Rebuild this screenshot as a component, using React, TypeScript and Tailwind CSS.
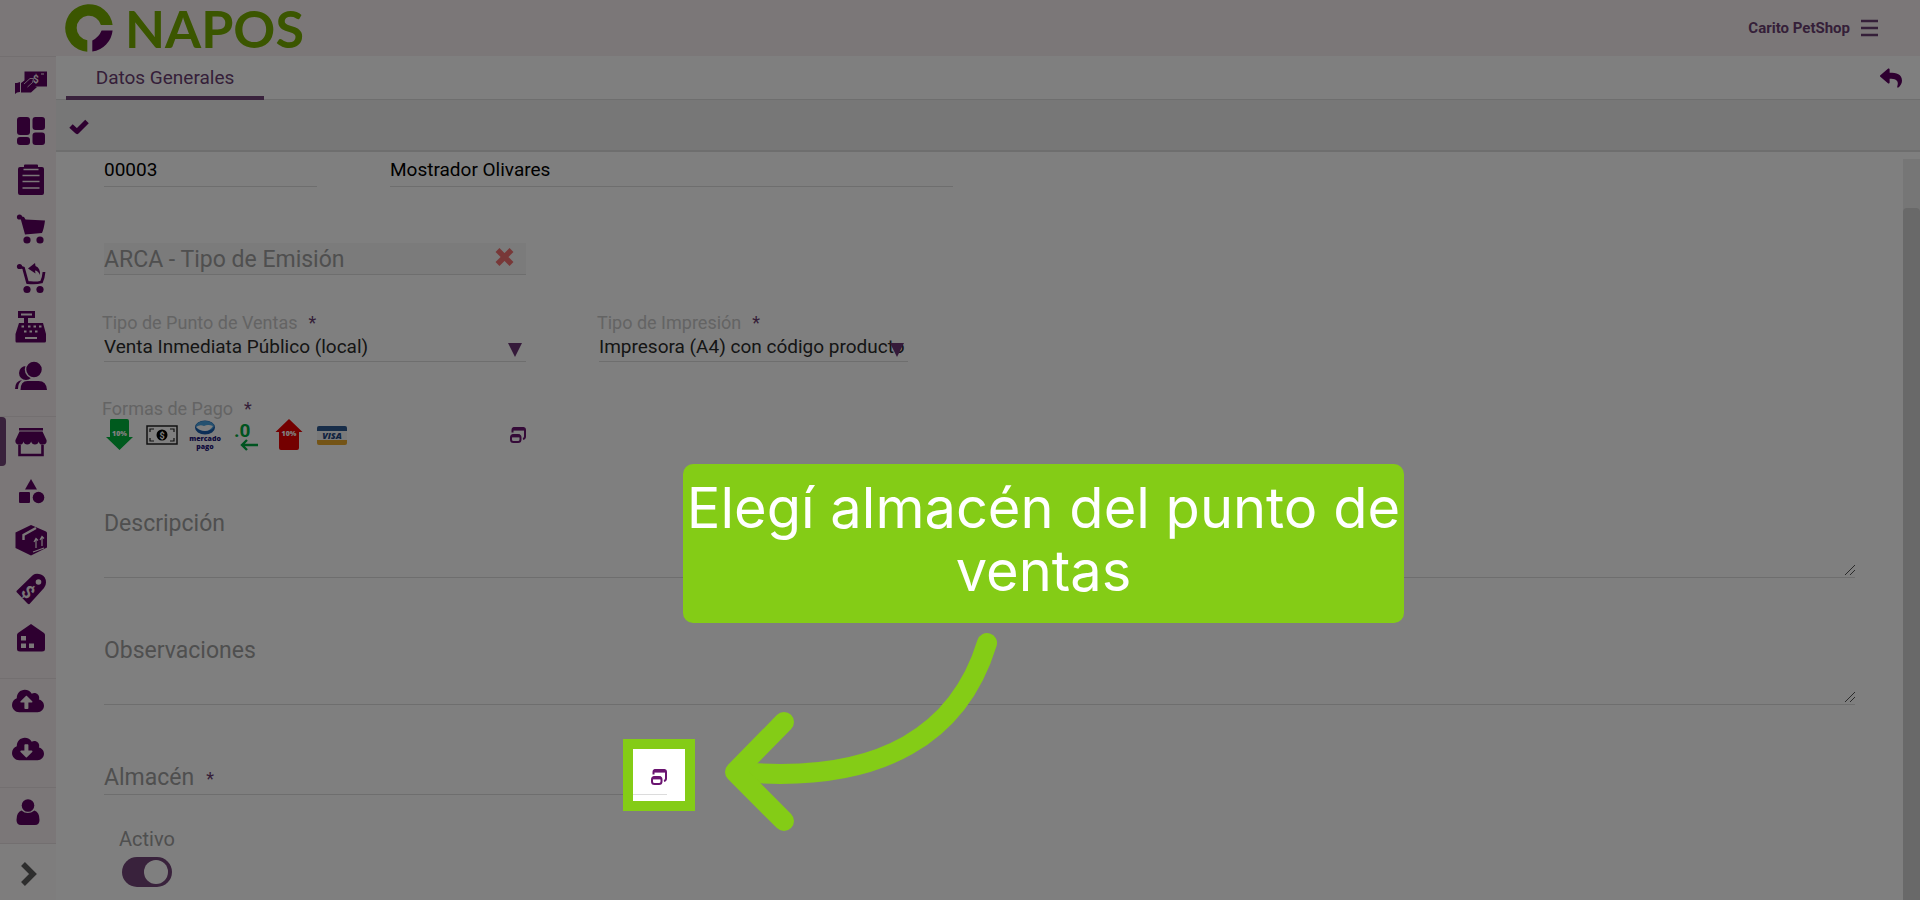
import { useState } from "react";
import type { ReactNode } from "react";
import { FaCloudDownloadAlt, FaCloudUploadAlt, FaReply } from "react-icons/fa";

function Logo() {
  return (
    <a href="#" className="flex items-center gap-3 text-[#76ac00]">
      <svg width="48" height="48" viewBox="-24 -24 48 48">
        <path fill="#76ac00" d="M23.6-3A23.8 23.8 0 1 0-1.7 23.7V12.2A12.3 12.3 0 1 1 11.9-3Z" />
        <path fill="#5c0060" d="M3.3 23.6A23.8 23.8 0 0 0 23.6 2.4H12.6Q10 9 3.3 12.4Z" />
      </svg>
      <span className="font-[Lato,sans-serif] text-[52px] font-bold leading-[56px]">NAPOS</span>
    </a>
  );
}

// Sidebar icons share a 32x32 canvas
function Icon({ children }: { children: ReactNode }) {
  return (
    <svg width="32" height="32" viewBox="0 0 32 32" fill="currentColor">
      {children}
    </svg>
  );
}

const cut = "#f6eff0";

const mainItems = [
  {
    name: "Cobros",
    icon: (
      <Icon>
        <path d="M9.500 5.500H32v15H20l-4 3.500H7.500V17l2-2Z" />
        <path d="M0 17h2l3-1v10l-3 .5-2 1.500ZM6 17l7-5h6l-3 6 6 3-6 5.500H6Z" />
        <path d="M9 18l6-5.500h3.500l-1 4-5 4.500" fill="none" stroke={cut} strokeWidth=".8" />
        <text x="18" y="17" fontSize="10" fontWeight="700" fill={cut} fontFamily="Roboto, sans-serif">$</text>
        <path d="M26 8h3" stroke={cut} strokeWidth="1" />
      </Icon>
    ),
  },
  {
    name: "Tablero",
    icon: (
      <Icon>
        <rect x="2" y="2" width="13" height="18" rx="3" />
        <rect x="17.500" y="2" width="12.500" height="13" rx="3" />
        <rect x="2" y="22" width="13" height="8" rx="3" />
        <rect x="17.500" y="17.500" width="12.500" height="12.500" rx="3" />
      </Icon>
    ),
  },
  {
    name: "Pedidos",
    icon: (
      <Icon>
        <path d="M5 3h4V1.500Q9 .5 10 .5h12q1 0 1 1V3h4q2 0 2 2v24q0 2-2 2H5q-2 0-2-2V5q0-2 2-2Z" />
        <path d="M8.500 5.500h15M7.500 11.500h17M7.500 17.500h17M7.500 24h17" stroke={cut} strokeWidth="1.600" />
      </Icon>
    ),
  },
  {
    name: "Ventas",
    icon: (
      <Icon>
        <circle cx="4.500" cy="4" r="2.600" />
        <path d="M5 3l4 1 1.500 2.500L30 7.500q-1 8-3 12.500L10 21.500 6 7Z" />
        <circle cx="12" cy="27" r="3.600" />
        <circle cx="25" cy="27" r="3.600" />
      </Icon>
    ),
  },
  {
    name: "Devoluciones",
    icon: (
      <Icon>
        <circle cx="4.500" cy="4.500" r="2.600" />
        <path d="M4 4.500l4.500 1.500 4 14.500q8 1 14-.5 2-4 2.500-10" fill="none" stroke="currentColor" strokeWidth="2.800" />
        <path d="M13 6.500l7-5.500.5 3q5 2 4.500 9-2-4.500-5-4.500l.5 3Z" />
        <circle cx="12" cy="27.500" r="3.600" />
        <circle cx="25" cy="27.500" r="3.600" />
      </Icon>
    ),
  },
  {
    name: "Caja",
    icon: (
      <Icon>
        <path fillRule="evenodd" d="M3 0h17v7h-7v5h15l3 11v7q0 1.500-1.500 1.500h-28Q.5 31.500.5 30v-7L4 12h5V7H3Zm3 2.500v2h11v-2Z" />
        <path d="M6.500 15.500h2.500m4 0h2.500m3 0H21m3 0h2.500M9 20.500h2.500m3 0H17m3 0h2.500" stroke={cut} strokeWidth="2.200" />
        <path d="M10 27h12" stroke={cut} strokeWidth="2" />
      </Icon>
    ),
  },
  {
    name: "Clientes",
    icon: (
      <Icon>
        <circle cx="11" cy="13" r="7" />
        <circle cx="19" cy="9.500" r="8.500" fill="currentColor" stroke={cut} strokeWidth="1.500" />
        <path d="M0 29q0-8 7-9-4 3-4 9Z" />
        <path d="M5.500 30q0-9 7-9h11q8 0 8.500 9Z" />
      </Icon>
    ),
  },
];

const configItems = [
  {
    name: "Puntos de venta",
    active: true,
    icon: (
      <Icon>
        <path d="M4 2h24v2.500H4ZM4.500 5.500h23L31.500 14a3.900 3.900 0 0 1-7.700 1.500 4 4 0 0 1-7.700 0 4 4 0 0 1-7.700 0A4 4 0 0 1 .5 14Z" />
        <path d="M4.500 19v10h23V19" fill="none" stroke="currentColor" strokeWidth="2.600" />
      </Icon>
    ),
  },
  {
    name: "Categorías",
    icon: (
      <Icon>
        <path d="M16 4l6 10.500H10Z" />
        <rect x="4" y="17" width="11" height="11" rx="1" />
        <circle cx="23.500" cy="22.500" r="5.800" />
      </Icon>
    ),
  },
  {
    name: "Productos",
    icon: (
      <Icon>
        <path d="M16 1l15 6.500Q32 8 32 9v14.500L16 31.500.5 24V8.500Z" />
        <path d="M8.500 16V11L21 4" fill="none" stroke={cut} strokeWidth="2.400" />
        <path d="M21 15v9m-2-6l2-3.500 2 2M27 13v9m-2-6l2-3.500 2 2M18 28l11-4" fill="none" stroke={cut} strokeWidth="1.200" />
      </Icon>
    ),
  },
  {
    name: "Precios",
    icon: (
      <Icon>
        <path d="M2.500 17L18 2q3-2 8-.5 5 2 5 8 0 3-2 5.500L14.500 31Q13 31.500 12 30L1.500 19Q1 18 2.500 17Z" />
        <circle cx="23.500" cy="9" r="2.800" fill={cut} />
        <text x="13.500" y="25.500" fontSize="18" fontWeight="700" textAnchor="middle" fill={cut} fontFamily="Roboto, sans-serif" transform="rotate(45 13.500 18.500)">$</text>
      </Icon>
    ),
  },
  {
    name: "Almacenes",
    icon: (
      <Icon>
        <path d="M16 2l13 9q1 1 1 2v14q0 2.500-3 2.500H5q-3 0-3-2.500V13q0-1 1-2Z" />
        <path d="M6 14h5v4.500H6ZM6 21.500h5V26H6ZM14 21.500h5V26h-5Z" fill={cut} />
      </Icon>
    ),
  },
];

function NavButton({ name, active, children }: { name: string; active?: boolean; children: ReactNode }) {
  return (
    <button
      type="button"
      aria-label={name}
      className={
        "relative flex h-[49px] w-full items-center justify-center pl-[6px] " +
        (active ? "before:absolute before:left-0 before:h-full before:w-[6px] before:rounded-r before:bg-[#724578]" : "")
      }
    >
      {children}
    </button>
  );
}

function Sidebar() {
  return (
    <aside className="w-14 shrink-0 border-t border-[#e6dfe0] bg-[#f6eff0] text-[#5c0060]">
      <nav className="border-b border-[#e6dfe0] pb-4">
        {mainItems.map((item) => (
          <NavButton key={item.name} name={item.name}>{item.icon}</NavButton>
        ))}
      </nav>
      <nav className="border-b border-[#e6dfe0] pb-4">
        {configItems.map((item) => (
          <NavButton key={item.name} name={item.name} active={item.active}>{item.icon}</NavButton>
        ))}
      </nav>
      <div className="border-b border-[#e6dfe0] pb-3">
        <button type="button" aria-label="Subir" className="flex h-12 w-full items-center justify-center pb-1">
          <FaCloudUploadAlt className="h-8 w-8" />
        </button>
        <button type="button" aria-label="Descargar" className="flex h-12 w-full items-center justify-center pb-1">
          <FaCloudDownloadAlt className="h-8 w-8" />
        </button>
      </div>
      <button type="button" aria-label="Usuario" className="flex h-14 w-full items-center justify-center border-b border-[#e6dfe0] pb-2">
        <svg width="24" height="26" viewBox="0 0 24 26" fill="currentColor">
          <circle cx="12" cy="6.500" r="6.300" />
          <path d="M5.500 11.500q6 5 13 0 5 1.500 5 9.500 0 5-4.500 5H5q-4.500 0-4.500-5 0-8 5-9.500Z" />
        </svg>
      </button>
      <button type="button" aria-label="Expandir menú" className="flex h-14 w-full items-center justify-center bg-[#fcfafa] pl-[2px] pt-1 text-[#5c5c5c]">
        <svg width="18" height="26" viewBox="0 0 18 26" fill="none" stroke="currentColor" strokeWidth="5.500">
          <path d="M3 3l10 10L3 23" />
        </svg>
      </button>
    </aside>
  );
}

function PopupIcon() {
  return (
    <svg width="16" height="16" viewBox="0 0 16 16" fill="none" stroke="#6a1470">
      <path d="M2.500 5.500V3q0-2 2-2H13q2 0 2 2v6.500q0 2-2 2.500" strokeWidth="2" />
      <path d="M3 2h11" strokeWidth="3.200" />
      <rect x="1" y="8" width="9.500" height="7" rx="2.500" strokeWidth="2" />
      <path d="M2 9h8" strokeWidth="2.800" />
    </svg>
  );
}

function Required() {
  return <span className="ml-[11px] text-[#6b3f72]">*</span>;
}

function SelectField({ id, label, options, className }: { id: string; label: string; options: string[]; className: string }) {
  return (
    <div className={className}>
      <label htmlFor={id} className="-ml-[2px] block text-[18px] leading-[21px] text-[#c8c8c8]">
        {label}
        <Required />
      </label>
      <div className="relative border-b border-[#dcdcdc]">
        <select id={id} className="block h-7 w-full appearance-none overflow-hidden bg-transparent text-[19px] leading-7 text-[#2b2b2b] outline-none">
          {options.map((option) => (
            <option key={option}>{option}</option>
          ))}
        </select>
        <svg width="14" height="14" viewBox="0 0 14 14" className="pointer-events-none absolute right-1 top-[10px]">
          <path d="M0 0h14L7 14Z" fill="#6b3574" />
        </svg>
      </div>
    </div>
  );
}

function PaymentIcons() {
  return (
    <div className="flex items-center gap-[10px]">
      <svg width="32" height="32" viewBox="0 0 32 32">
        <path d="M7 0h16q2 0 2 2v16h4L15.500 31 2 18h4V2q0-2 1-2Z" fill="#00b43c" />
        <text x="15.500" y="16.500" fontSize="7" fontWeight="800" textAnchor="middle" fill="#fff" fontFamily="Open Sans, sans-serif">10%</text>
      </svg>
      <svg width="32" height="32" viewBox="0 0 32 32">
        <rect x="1" y="7" width="30" height="18" fill="#fff" stroke="#222" strokeWidth="1.500" />
        <path d="M4 13v-3h4M24 10h4v3M28 19v3h-4M8 22H4v-3" fill="none" stroke="#222" strokeWidth="1.200" />
        <circle cx="16" cy="16" r="5.500" fill="#000" />
        <text x="16" y="19.500" fontSize="9" fontWeight="700" textAnchor="middle" fill="#fff" fontFamily="Roboto, sans-serif">$</text>
      </svg>
      <svg width="34" height="32" viewBox="0 0 34 32">
        <ellipse cx="17" cy="8.500" rx="10" ry="7" fill="#1a5fae" />
        <ellipse cx="17" cy="7" rx="9" ry="5" fill="#4aa3e0" />
        <path d="M8 8q4-3 8-1 4-2 9 0-3 5-8 5T8 8Z" fill="#fff" />
        <text x="17" y="21.500" fontSize="7" fontWeight="800" textAnchor="middle" fill="#1c1478" fontFamily="Open Sans, sans-serif">mercado</text>
        <text x="17" y="29.500" fontSize="7" fontWeight="800" textAnchor="middle" fill="#1c1478" fontFamily="Open Sans, sans-serif">pago</text>
      </svg>
      <svg width="32" height="32" viewBox="0 0 32 32">
        <text x="2" y="18" fontSize="19" fontWeight="700" fill="#00a840" fontFamily="Roboto, sans-serif">.0</text>
        <path d="M26 26H10m5-5l-5 5 5 5" fill="none" stroke="#00a840" strokeWidth="2.400" />
      </svg>
      <svg width="32" height="32" viewBox="0 0 32 32">
        <path d="M15 0l13.500 13H25v16q0 2-2 2H7q-2 0-2-2V13H1.500Z" fill="#e80000" />
        <text x="15" y="17" fontSize="7" fontWeight="800" textAnchor="middle" fill="#fff" fontFamily="Open Sans, sans-serif">10%</text>
      </svg>
      <svg width="32" height="32" viewBox="0 0 32 32">
        <rect x="1" y="7" width="30" height="19" rx="2" fill="#f4f4f4" />
        <path d="M1 12V9q0-2 2-2h26q2 0 2 2v3Z" fill="#2f5a92" />
        <path d="M1 21h30v3q0 2-2 2H3q-2 0-2-2Z" fill="#e8a92c" />
        <text x="16" y="19.500" fontSize="9" fontWeight="900" fontStyle="italic" textAnchor="middle" fill="#1e4580" fontFamily="Open Sans, sans-serif">VISA</text>
      </svg>
    </div>
  );
}

function NotesField({ id, label }: { id: string; label: string }) {
  return (
    <div className="relative mt-[58px] border-b border-[#dcdcdc]">
      <label htmlFor={id} className="block text-[23px] leading-[30px] text-[#9e9e9e]">{label}</label>
      <textarea id={id} className="block h-[38px] w-full resize-none bg-transparent text-[19px] outline-none" />
      <svg width="10" height="10" viewBox="0 0 10 10" className="pointer-events-none absolute bottom-[2px] right-0">
        <path d="M0 10L10 0M5 10l5-5" stroke="#555" strokeWidth="1" />
      </svg>
    </div>
  );
}

// Highlight round the current control, with the page dimmed behind it
function TourStep({ text }: { text: string }) {
  return (
    <div className="pointer-events-none absolute -left-7 -top-[30px] z-10 h-[72px] w-[72px] border-10 border-[#84cc16] shadow-[0_0_0_9999px_rgba(0,0,0,0.5)]">
      <svg width="290" height="220" viewBox="0 0 290 220" className="absolute left-[82px] top-[-126px]" fill="none" stroke="#84cc16" strokeWidth="20" strokeLinecap="round" strokeLinejoin="round">
        <path d="M272 20C245 108 170 162 24 149" />
        <path d="M69 99L20 149l49 49" />
      </svg>
      <div className="absolute left-[50px] top-[-285px] flex h-[159px] w-[721px] justify-center rounded-[10px] bg-[#84cc16] pt-[13px]">
        <p className="w-[721px] text-center font-[Inter,sans-serif] text-[56px] leading-[63px] text-white">{text}</p>
      </div>
    </div>
  );
}

export default function App() {
  const [code, setCode] = useState("00003");
  const [name, setName] = useState("Mostrador Olivares");
  const [active, setActive] = useState(true);

  return (
    <div className="flex min-h-screen flex-col overflow-hidden bg-white font-[Roboto,sans-serif]">
      <header className="flex h-14 items-center justify-between bg-[#f6eff0] pl-[65px] pr-[42px]">
        <Logo />
        <div className="flex items-center gap-[11px] text-[#6b3f72]">
          <span className="text-[15px] font-bold">Carito PetShop</span>
          <button type="button" aria-label="Menú">
            <svg width="17" height="18" viewBox="0 0 17 18" stroke="#6b3f72" strokeWidth="2.500">
              <path d="M0 2h17M0 9h17M0 16h17" />
            </svg>
          </button>
        </div>
      </header>

      <div className="flex flex-1">
        <Sidebar />

        <main className="flex min-w-0 flex-1 flex-col">
          <div className="flex h-11 items-stretch justify-between border-b border-[#dcdcdc] pl-[10px] pr-[18px]">
            <button type="button" className="-mb-px w-[198px] border-b-4 border-[#724578] pt-1 text-[19px] text-[#6b3f72]">
              Datos Generales
            </button>
            <button type="button" aria-label="Volver" className="text-[#5c0060]">
              <FaReply className="h-[22px] w-[22px]" />
            </button>
          </div>
          <div className="flex h-[52px] items-center border-b-2 border-[#dcdcdc] bg-[#eeeeee] pl-[13px] pt-1">
            <button type="button" aria-label="Guardar" className="text-[#5c0060]">
              <svg width="20" height="16" viewBox="0 0 20 16" fill="none" stroke="currentColor" strokeWidth="5">
                <path d="M2 7l6 5.500L18 2.500" strokeLinejoin="round" />
              </svg>
            </button>
          </div>

          <div className="flex flex-1">
            <form className="min-w-0 flex-1 px-12">
              <div className="flex gap-[73px]">
                <input
                  aria-label="Código"
                  value={code}
                  onChange={(e) => setCode(e.target.value)}
                  className="h-[35px] w-[213px] border-b border-[#dcdcdc] bg-transparent text-[19px] text-black outline-none"
                />
                <input
                  aria-label="Nombre"
                  value={name}
                  onChange={(e) => setName(e.target.value)}
                  className="h-[35px] w-[563px] border-b border-[#dcdcdc] bg-transparent text-[19px] text-black outline-none"
                />
              </div>

              <div className="mt-14 flex h-8 w-[422px] items-center border-b border-[#dcdcdc] bg-[#f6f6f6] pr-3">
                <input
                  aria-label="ARCA - Tipo de Emisión"
                  placeholder="ARCA - Tipo de Emisión"
                  className="min-w-0 flex-1 bg-transparent pt-[2px] text-[23px] leading-[28px] outline-none placeholder:text-[#9e9e9e]"
                />
                <button type="button" aria-label="Quitar" className="pb-1 text-[#f07070]">
                  <svg width="19" height="18" viewBox="0 0 19 18" stroke="currentColor" strokeWidth="5.500">
                    <path d="M2.500 2l14 14M16.500 2l-14 14" />
                  </svg>
                </button>
              </div>

              <div className="mt-[37px] flex gap-[73px]">
                <SelectField id="tipo-punto" label="Tipo de Punto de Ventas" options={["Venta Inmediata Público (local)"]} className="w-[422px]" />
                <SelectField id="tipo-impresion" label="Tipo de Impresión" options={["Impresora (A4) con código producto"]} className="w-[309px]" />
              </div>

              <div className="mt-9 w-[422px]">
                <div className="-ml-[2px] text-[18px] leading-[21px] text-[#c8c8c8]">
                  Formas de Pago
                  <Required />
                </div>
                <div className="flex items-center justify-between">
                  <PaymentIcons />
                  <button type="button" aria-label="Elegir formas de pago">
                    <PopupIcon />
                  </button>
                </div>
              </div>

              <NotesField id="descripcion" label="Descripción" />
              <NotesField id="observaciones" label="Observaciones" />

              <div className="mt-[58px] flex w-[563px] items-center border-b border-[#dcdcdc]">
                <label htmlFor="almacen" className="text-[23px] leading-[30px] text-[#9e9e9e]">
                  Almacén
                  <span className="ml-3 text-[18px] text-[#6b3f72]">*</span>
                </label>
                <input id="almacen" className="min-w-0 flex-1 bg-transparent px-3 text-[18px] leading-6 outline-none" />
                <div className="relative pb-1">
                  <button type="button" aria-label="Elegir almacén" className="block">
                    <PopupIcon />
                  </button>
                  <TourStep text="Elegí almacén del punto de ventas" />
                </div>
              </div>

              <div className="mt-8 flex w-[72px] flex-col items-center gap-[6px] pl-[14px]">
                <label htmlFor="activo" className="text-[20px] leading-6 text-[#9e9e9e]">Activo</label>
                <input
                  id="activo"
                  type="checkbox"
                  checked={active}
                  onChange={(e) => setActive(e.target.checked)}
                  className="relative h-[30px] w-[50px] appearance-none rounded-full bg-gray-300 before:absolute before:left-[3px] before:top-[3px] before:h-6 before:w-6 before:rounded-full before:bg-white checked:bg-[#724578] checked:before:left-[22px]"
                />
              </div>
            </form>
            <div className="mt-[7px] flex w-[17px] bg-[#ededed] pt-[49px]">
              <div className="w-full rounded-t bg-[#d2d2d2]" />
            </div>
          </div>
        </main>
      </div>
    </div>
  );
}
